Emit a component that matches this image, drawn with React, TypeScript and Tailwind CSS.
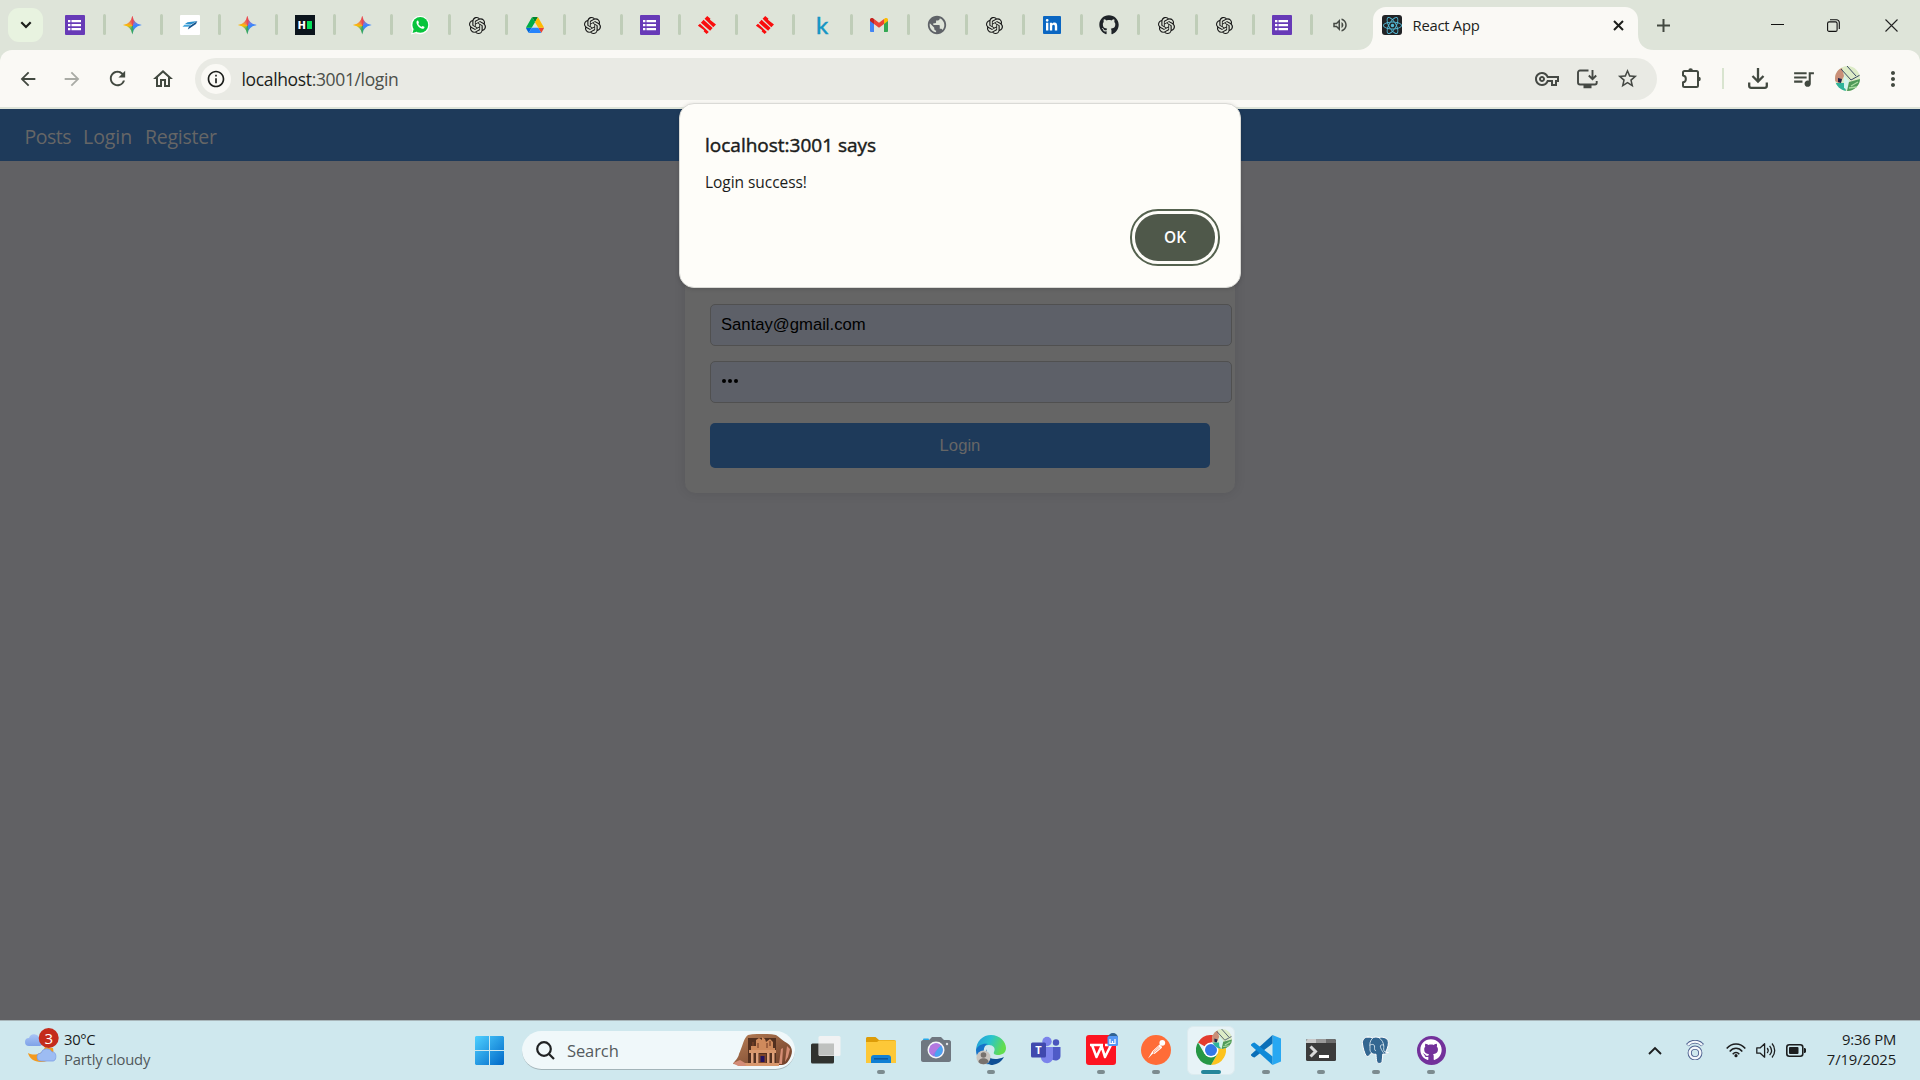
import React from "react";
import { SiOpenai, SiReact } from "react-icons/si";
import { FaGithub, FaLinkedinIn } from "react-icons/fa";
import {
  MdArrowBack,
  MdArrowForward,
  MdRefresh,
  MdOutlineHome,
  MdOutlineVpnKey,
  MdQueueMusic,
  MdMoreVert,
  MdInfoOutline,
  MdStarBorder,
  MdPublic,
  MdOutlineVolumeUp,
} from "react-icons/md";

/* ---------- favicons ---------- */

const Forms = () => (
  <svg width="20" height="20" viewBox="0 0 20 20">
    <rect width="20" height="20" rx="1" fill="#673ab7" />
    <path d="M3 5h2.4v2.2H3zM6.500 5h9.500v2.200H6.500zM3 9h2.400v2.200H3zM6.500 9h9.500v2.200H6.500zM3 13h2.400v2.200H3zM6.500 13h9.500v2.200H6.500z" fill="#fff" />
  </svg>
);

const Gemini = () => (
  <div
    className="size-[19px] bg-[conic-gradient(from_0deg,#ea4a50,#6a80e8_50deg,#3c86fb_90deg,#3c8cf5_150deg,#34a853_185deg,#7cb860_220deg,#fbbc04_270deg,#ef8a50_310deg,#ea4a50)] [clip-path:polygon(50%_0%,57%_22%,66%_34%,78%_43%,100%_50%,78%_57%,66%_66%,57%_78%,50%_100%,43%_78%,34%_66%,22%_57%,0%_50%,22%_43%,34%_34%,43%_22%)]"
  />
);

const Wing = () => (
  <svg width="20" height="20" viewBox="0 0 20 20">
    <rect width="20" height="20" rx="1" fill="#fff" />
    <path d="M17.300 6L7.500 7.200 5 9h7z" fill="#2b8fcb" />
    <path d="M11.500 9.300L4.500 9.800 2.500 11.800h6z" fill="#45a6dc" />
    <path d="M17.300 6L9 11.500l-1.200 3L16 9z" fill="#17558d" />
  </svg>
);

const HBlock = () => (
  <div className="flex size-5 items-center justify-center gap-px bg-[#0b141c]">
    <span className="font-['Inter',sans-serif] text-[10px] leading-none font-black text-white">H</span>
    <span className="h-2 w-[5px] bg-[#05e05a]" />
  </div>
);

const Whatsapp = () => (
  <svg width="20" height="20" viewBox="0 0 20 20">
    <path d="M1 19.500l1.300-4.600A9.200 9.200 0 1 1 5.800 18.200z" fill="#fff" />
    <circle cx="10.300" cy="9.900" r="7.900" fill="#08c43c" />
    <path d="M2.500 18l1.200-4 3 2.800z" fill="#08c43c" />
    <path d="M7.600 5.600c-1.200.6-1.400 1.900-.8 3.300.9 2.200 2.700 4 5.200 4.800 1.100.3 2.300-.1 2.500-1.400.1-.4-.2-.6-1.800-1.400-.5-.2-.8 1-1.300.9-1.400-.5-2.500-1.500-3.100-2.700-.2-.4.8-.9.600-1.400-.6-1.900-.7-2.200-1.300-2.100z" fill="#fff" />
  </svg>
);

const Drive = () => (
  <svg width="18" height="16" viewBox="0 0 87.300 78">
    <path d="m6.600 66.850 3.850 6.650c.8 1.400 1.950 2.500 3.300 3.300l13.750-23.800h-27.500c0 1.550.4 3.100 1.200 4.500z" fill="#0066da" />
    <path d="m43.650 25-13.750-23.800c-1.350.8-2.500 1.900-3.300 3.300l-25.400 44a9.060 9.060 0 0 0-1.200 4.500h27.500z" fill="#00ac47" />
    <path d="m73.550 76.800c1.350-.8 2.500-1.900 3.300-3.300l1.600-2.750 7.650-13.250c.8-1.400 1.200-2.950 1.200-4.500h-27.502l5.852 11.500z" fill="#ea4335" />
    <path d="m43.650 25 13.750-23.800c-1.350-.8-2.900-1.200-4.500-1.200h-18.500c-1.600 0-3.150.45-4.500 1.200z" fill="#00832d" />
    <path d="m59.800 53h-32.300l-13.750 23.800c1.350.8 2.900 1.200 4.500 1.200h50.800c1.600 0 3.150-.45 4.500-1.200z" fill="#2684fc" />
    <path d="m73.400 26.500-12.700-22c-.8-1.400-1.950-2.500-3.300-3.300l-13.750 23.800 16.150 28h27.450c0-1.550-.4-3.100-1.200-4.500z" fill="#ffba00" />
  </svg>
);

const RedBars = () => (
  <svg width="18" height="18" viewBox="0 0 18 18" fill="#f90d0d">
    <path d="M9.200 0l3.300 2.800-.6.9L18 8.500l-2.700 2.700L6.600 2.700z" />
    <path d="M5.600 3.800l9 8.300-2.500 2.600-9.200-8z" />
    <path d="M2 7.700l8.800 8.200L8.600 18l-3-2.800.6-.9L-.2 9.600z" />
  </svg>
);

const Gmail = () => (
  <svg width="18" height="14" viewBox="0 0 18 14">
    <path d="M0 2v11.200c0 .5.400.8.800.8H4V5z" fill="#4285f4" />
    <path d="M18 2v11.200c0 .5-.4.800-.8.800H14V5z" fill="#34a853" />
    <path d="M14 .9V6l4-3V1.800C18 .2 16.200-.5 15 .3z" fill="#fbbc04" />
    <path d="M4 6V.9L9 4.700l5-3.800V6L9 9.800z" fill="#ea4335" />
    <path d="M0 1.800V3l4 3V.9L3 .3C1.800-.5 0 .2 0 1.800z" fill="#c5221f" />
  </svg>
);

const OpenAi = () => <SiOpenai className="size-[17px] text-[#161616]" />;
const Kay = () => (
  <span className="font-['Lato',sans-serif] text-[24px] leading-5 text-[#1495c4] [-webkit-text-stroke:0.5px_#1495c4]">k</span>
);
const Globe = () => <MdPublic className="size-[22px] shrink-0 text-[#5f6368]" />;
const Linked = () => (
  <div className="flex size-[18px] items-center justify-center rounded-[1px] bg-[#0a66c2]">
    <FaLinkedinIn className="size-[13px] text-white" />
  </div>
);
const Hub = () => <FaGithub className="size-[20px] text-[#1f2328]" />;

const pinnedTabs = [
  Forms, Gemini, Wing, Gemini, HBlock, Gemini, Whatsapp, OpenAi, Drive, OpenAi, Forms,
  RedBars, RedBars, Kay, Gmail, Globe, OpenAi, Linked, Hub, OpenAi, OpenAi, Forms,
];

/* ---------- browser chrome ---------- */

function TabStrip() {
  return (
    <div className="flex h-[50px] shrink-0 bg-[#dee4d9] pl-2">
      <button className="mt-2 mr-[5.4px] flex h-[34px] w-[35px] shrink-0 items-center justify-center rounded-[11px] bg-[#e8f3e0]">
        <svg width="12" height="8" viewBox="0 0 12 8" fill="none" stroke="#1b1d1a" strokeWidth="2.200">
          <path d="M1.300 1.300L6 6l4.700-4.700" />
        </svg>
      </button>
      {pinnedTabs.map((Icon, i) => (
        <div key={i} className="flex h-[50px] w-[57.469px] shrink-0 items-center justify-between pl-[16.500px]">
          <div className="flex w-5 justify-center">
            <Icon />
          </div>
          <span className="mb-px h-[21px] w-[3px] rounded-full bg-[#bfcdb8]" />
        </div>
      ))}
      <div className="flex h-[50px] w-[44.300px] shrink-0 items-center pl-[18.500px]">
        <MdOutlineVolumeUp className="size-[18px] text-[#454944]" />
      </div>
      <svg width="16" height="16" className="mt-[34px] shrink-0">
        <path d="M16 0v16H0C10 16 16 10 16 0z" fill="#faf9f5" />
      </svg>
      <div className="mt-[7px] flex h-[43px] w-[265px] shrink-0 items-center rounded-t-[13px] bg-[#faf9f5] pb-[7px] pl-[9px]">
        <div className="flex size-5 items-center justify-center rounded-[3px] bg-[#222426]">
          <SiReact className="size-[19px] text-[#53b9d6]" />
        </div>
        <span className="ml-[10.500px] font-['Open_Sans',sans-serif] text-[14.800px] leading-5 tracking-[-0.25px] text-[#1d1f1c]">React App</span>
        <svg className="mr-[14px] ml-auto" width="11" height="11" viewBox="0 0 11 11" stroke="#1c1e1b" strokeWidth="2">
          <path d="M1 1l9 9M10 1l-9 9" />
        </svg>
      </div>
      <svg width="16" height="16" className="mt-[34px] shrink-0">
        <path d="M0 0v16h16C6 16 0 10 0 0z" fill="#faf9f5" />
      </svg>
      <div className="flex flex-1 items-center">
        <svg className="ml-[3px]" width="13" height="13" viewBox="0 0 13 13" stroke="#424840" strokeWidth="2">
          <path d="M6.500 0v13M0 6.500h13" />
        </svg>
        <svg className="mb-[3px] ml-[100.500px]" width="13" height="2" viewBox="0 0 13 2">
          <rect y="1" width="13" height="1" fill="#111" />
        </svg>
        <svg className="ml-[43px]" width="13" height="13" viewBox="0 0 13 13" fill="none" stroke="#111" strokeWidth="1.100">
          <rect x=".6" y="2.900" width="9.500" height="9.500" rx="1.500" />
          <path d="M3 .7h6.500a2.800 2.800 0 0 1 2.800 2.800V10" />
        </svg>
        <svg className="ml-[45px]" width="13" height="13" viewBox="0 0 13 13" stroke="#222" strokeWidth="1.100">
          <path d="M.5 .5l12 12M12.500 .5l-12 12" />
        </svg>
      </div>
    </div>
  );
}

function Avatar({ className }: { className: string }) {
  return (
    <svg className={className} viewBox="0 0 25 25">
      <defs>
        <clipPath id="avatarClip">
          <circle cx="12.500" cy="12.500" r="12.500" />
        </clipPath>
      </defs>
      <g clipPath="url(#avatarClip)">
        <rect width="25" height="25" fill="#dcebc6" />
        <path d="M0 5l7-3 2 8-4 8-5-3z" fill="#c98f78" />
        <path d="M3 12l4 1-1 4-3-1z" fill="#22264a" />
        <path d="M0 17l9 0 2 8H0z" fill="#2fb39a" />
        <path d="M9 9l5 6-1 9-4-2z" fill="#d5f3ee" />
        <path d="M14 16l11-3v12H12z" fill="#4f9a58" />
        <path d="M16 20l7-4M14 22l8-1" stroke="#a8dca0" strokeWidth="1.300" />
        <path d="M6 3l10 11 9-5M12 0l9 10" stroke="#3b4a66" strokeWidth="1" fill="none" />
      </g>
    </svg>
  );
}

function Toolbar() {
  return (
    <div className="h-[59px] shrink-0 bg-[#dee4d9]">
      <div className="flex h-[57px] items-center rounded-t-[12px] bg-[#faf9f5] pl-[16.500px]">
        <MdArrowBack className="size-[22px] text-[#424940]" />
        <MdArrowForward className="ml-[22.500px] size-[22px] text-[#a9aba5]" />
        <MdRefresh className="ml-[23px] size-[23px] text-[#424940]" />
        <MdOutlineHome className="ml-[21.500px] size-[24px] text-[#424940]" />
        <div className="ml-[20.500px] flex h-[42px] w-[1462px] items-center rounded-full bg-[#e9eae4] pl-1.5">
          <div className="flex size-[30px] items-center justify-center rounded-full bg-[#faf9f5]">
            <MdInfoOutline className="size-5 text-[#1c1e1b]" />
          </div>
          <span className="ml-[10.500px] font-['Open_Sans',sans-serif] text-[17.500px] leading-6 tracking-[-0.350px] text-[#4b4f49]">
            <span className="text-[#1b1d1a]">localhost</span>:3001/login
          </span>
          <MdOutlineVpnKey className="ml-auto size-6 text-[#454944]" />
          <svg className="ml-[18px]" width="21" height="20" viewBox="0 0 21 20" fill="none" stroke="#454944" strokeWidth="1.900">
            <path d="M11.500 1.500H3a2 2 0 0 0-2 2v10a2 2 0 0 0 2 2h15a1.700 1.700 0 0 0 1.700-1.700V12" />
            <path d="M15.500 1v9M11.800 6.500l3.700 3.700 3.700-3.700" />
            <path d="M6.500 17.500h8" strokeWidth="3.500" />
          </svg>
          <MdStarBorder className="mr-[18px] ml-[18px] size-[23px] text-[#454944]" />
        </div>
        <svg className="mb-[2px] ml-[24px]" width="22" height="22" viewBox="0 0 22 22" fill="none" stroke="#424940" strokeWidth="2" strokeLinejoin="round">
          <path d="M3.500 4h12A1.500 1.500 0 0 1 17 5.500v13a1.500 1.500 0 0 1-1.500 1.500h-12A1.500 1.500 0 0 1 2 18.500v-3.300c3.800-.4 3.800-6.200 0-6.600V5.500A1.500 1.500 0 0 1 3.500 4z" />
          <path d="M7.300 3.500a2.300 2.300 0 0 1 4.600 0zM17.500 9.700a2.300 2.300 0 0 1 0 4.600z" fill="#424940" stroke="none" />
        </svg>
        <span className="ml-[19px] h-[21px] w-[2px] bg-[#d8e4cf]" />
        <svg className="ml-[23.500px]" width="20" height="21" viewBox="0 0 20 21" fill="none" stroke="#424940" strokeWidth="2.300">
          <path d="M10 0v13M4.500 8L10 13.500 15.500 8M1.200 14.500v3.300a2 2 0 0 0 2 2h13.600a2 2 0 0 0 2-2v-3.300" />
        </svg>
        <MdQueueMusic className="ml-[23px] size-[25px] text-[#424940]" />
        <Avatar className="ml-[19.500px] size-[25px]" />
        <MdMoreVert className="ml-[20.500px] size-6 text-[#424940]" />
      </div>
    </div>
  );
}

/* ---------- page ---------- */

function LoginPage() {
  return (
    <div className="flex h-[911px] shrink-0 flex-col bg-[#616164]">
      <nav className="flex h-[52px] shrink-0 items-center bg-[#1e3a5a] pt-1 pl-[24.500px] font-['Open_Sans',sans-serif] text-[19.500px] text-[#666666]">
        <a className="w-[58.500px] tracking-[-0.5px]">Posts</a>
        <a className="w-[62px] tracking-[-0.050px]">Login</a>
        <a className="tracking-[-0.25px]">Register</a>
      </nav>
      <div className="mx-auto mt-[60px] flex h-[272px] w-[550px] flex-col rounded-[10px] bg-[#656565] px-[25px] pt-[83px] font-['Liberation_Sans',sans-serif] text-[16.670px] shadow-[0_0_12px_rgba(0,0,0,0.1)]">
        <div className="flex h-[42px] w-[522px] shrink-0 items-center rounded-[5px] border border-[#505050] bg-[#5d6068] px-[10px] pb-[2px] text-black">
          Santay@gmail.com
        </div>
        <div className="mt-[15px] flex h-[42px] w-[522px] shrink-0 items-center gap-[1.600px] rounded-[5px] border border-[#505050] bg-[#5d6068] px-[10.500px] pb-[2px]">
          <span className="size-[4.500px] rounded-full bg-black" />
          <span className="size-[4.500px] rounded-full bg-black" />
          <span className="size-[4.500px] rounded-full bg-black" />
        </div>
        <button className="mt-5 h-[45px] w-[500px] shrink-0 rounded-[5px] bg-[#1e3a5a] text-[#666666]">Login</button>
      </div>
    </div>
  );
}

function AlertDialog() {
  return (
    <div className="absolute top-[103px] left-[679px] flex h-[185px] w-[562px] flex-col rounded-[15px] border border-[#dadad6] bg-[#fefdf9] pt-[26px] pl-[25px] font-['Open_Sans',sans-serif] text-[#1b1c1a] shadow-[0_1px_4px_rgba(0,0,0,0.15)]">
      <h1 className="h-[30px] text-[19px] leading-[30px] [-webkit-text-stroke:0.45px_#1b1c1a]">localhost:3001 says</h1>
      <p className="mt-[10px] text-[15.500px] leading-[24px] tracking-[-0.050px]">Login success!</p>
      <button className="mt-[15px] mr-5 flex h-[57px] w-[90px] items-center justify-center self-end rounded-[28px] border-2 border-[#55624f] p-[3px]">
        <span className="flex h-full w-full items-center justify-center rounded-[23px] bg-[#4f584a] pt-px text-[15.500px] font-semibold text-white">OK</span>
      </button>
    </div>
  );
}

/* ---------- taskbar ---------- */

const Weather = () => (
  <svg width="34" height="36" viewBox="0 0 34 36">
    <defs>
      <linearGradient id="cloud" x1="0" y1="0" x2="0" y2="1">
        <stop offset="0" stopColor="#a9c4f5" />
        <stop offset="1" stopColor="#7fa2e8" />
      </linearGradient>
    </defs>
    <path d="M4 18a4 4 0 0 1 0-8 5.500 5.500 0 0 1 10-1c4 0 5 9 1 9z" fill="url(#cloud)" />
    <path d="M28 20c2 8-3 14-12 14-7 0-12-4-13-9 6 3 14 2 17-6z" fill="#f39a1e" />
    <path d="M16 33a4 4 0 0 1 0-8 6 6 0 0 1 11-1c5-1 5 9 1 9z" fill="#9dbcf3" stroke="#7ea0e6" strokeWidth=".8" />
    <circle cx="23.700" cy="10" r="10" fill="#c42b1c" />
    <text x="23.700" y="15.500" textAnchor="middle" fontFamily="Open Sans, sans-serif" fontSize="15" fill="#fff">3</text>
  </svg>
);

const WindowsLogo = () => (
  <svg width="29" height="29" viewBox="0 0 29 29">
    <defs>
      <linearGradient id="win" x1="0" y1="0" x2="1" y2="1">
        <stop offset="0" stopColor="#4fd0ff" />
        <stop offset="1" stopColor="#0068c8" />
      </linearGradient>
    </defs>
    <path d="M1 0h13v14H0V1zM15 0h13l1 1v13H15zM0 15h14v14H1l-1-1zM15 15h14v13l-1 1H15z" fill="url(#win)" />
  </svg>
);

const Petra = () => (
  <svg width="60" height="33" viewBox="0 0 60 33">
    <defs>
      <linearGradient id="rock" x1="0" y1="0" x2="1" y2="1">
        <stop offset="0" stopColor="#b98058" />
        <stop offset="1" stopColor="#6d3c26" />
      </linearGradient>
    </defs>
    <path d="M0 30c2-4 5-5 6-10 3-6 5-17 9-19 8-1.500 20-1.500 28 0 3 2 7 6 11 8 5 3 6 8 4 13-2 5-5 9-9 9H9z" fill="url(#rock)" />
    <path d="M15 4h28v27H15z" fill="#53301f" />
    <path d="M18 12h5V6l3-2 3 2v-3l3 2 1 3 4-3 3 3v6h2v3H18z" fill="#cf8a5c" />
    <path d="M16 16h27v3H16zM12 29h34v3H12z" fill="#d9986d" />
    <path d="M18 19h2.500v10H18zM23 19h2.500v10H23zM34 19h2.500v10H34zM39 19h2.500v10H39z" fill="#e0a27c" />
    <path d="M26 20h7v9h-7z" fill="#7d4529" />
    <path d="M27.500 22h4v6h-4z" fill="#24125e" />
    <path d="M48 15l2-1-1 16h-3zM54 12l3 3-2 8-3 5z" fill="#d58d74" />
    <path d="M0 29l7-3 5 3 1 3H5z" fill="#d48c77" />
    <path d="M20 8v4M37 7v5M25 9v5M34 9v5" stroke="#7c452b" strokeWidth="1.200" />
  </svg>
);

const TaskView = () => (
  <svg width="30" height="30" viewBox="0 0 30 30">
    <rect y="8.500" width="23" height="20" rx="1.500" fill="#30322f" />
    <rect x="7.500" y="1" width="22" height="20" rx="1.500" fill="#f2f2f2" opacity=".96" />
    <path d="M8 8.500h15V20.500H8z" fill="#bfc1bf" />
  </svg>
);

const Folder = () => (
  <svg width="30" height="30" viewBox="0 0 30 30">
    <path d="M0 3.500C0 2.500.8 2 1.500 2h8l3.500 3h15c1 0 2 .8 2 1.800V10H0z" fill="#dd9c08" />
    <path d="M0 7h11l2-1.500h16l1 1V28H0z" fill="#fdc838" />
    <path d="M5 28v-5c0-2 1-3 3-3h14c2 0 3 1 3 3v5z" fill="#1180d4" />
    <rect x="8" y="23.200" width="14" height="1.300" fill="#0a4e91" />
  </svg>
);

const Camera = () => (
  <svg width="30" height="30" viewBox="0 0 30 30">
    <rect x="2" y="3.500" width="6" height="4" rx="1" fill="#26a8e8" />
    <path d="M0 7c0-1 1-2 2-2h6l3-3h9l3 3h5c1 0 2 1 2 2v18c0 1-1 2-2 2H2c-1 0-2-1-2-2z" fill="#6f7780" />
    <circle cx="15" cy="15" r="8.500" fill="#f4f4f6" />
    <circle cx="15" cy="15" r="6.800" fill="#8a7ae8" />
    <path d="M9 12a6.800 6.800 0 0 1 11-1.500l-9 9.800A6.800 6.800 0 0 1 9 12z" fill="#b478df" />
    <path d="M20 10.500a6.800 6.800 0 0 1-5 11.300c-2 0-2-5 5-11.300z" fill="#4aa3f0" />
    <circle cx="26" cy="9" r="1.200" fill="#dfe3e6" />
  </svg>
);

const Edge = () => (
  <svg width="30" height="30" viewBox="0 0 30 30">
    <defs>
      <linearGradient id="edgeTop" x1="0" y1="0" x2="1" y2=".3">
        <stop offset="0" stopColor="#2298dc" />
        <stop offset=".5" stopColor="#29c3cf" />
        <stop offset="1" stopColor="#62dd4e" />
      </linearGradient>
    </defs>
    <path d="M0 16C0 6 7 0 15 0c9 0 15 7 15 13 0 5-4 7-8 7-3 0-5-1-4-3 2-4-1-7-5-7C7 10 1 14 0 16z" fill="url(#edgeTop)" />
    <path d="M0 15c2-5 7-7 12-6-3 1-5 4-4 9 1 6 6 9 11 9-9 6-19-1-19-12z" fill="#1673c8" />
    <path d="M11 14c-3 8 5 13 17 8-3 6-9 8-13 8-5-1-9-9-4-16z" fill="#0e4f95" />
    <circle cx="7.500" cy="22.500" r="7" fill="#c9c5c0" />
    <circle cx="7.500" cy="20" r="2.800" fill="#77726e" />
    <path d="M2.500 27c0-5 10-5 10 0-2 3-8 3-10 0z" fill="#77726e" />
  </svg>
);

const Teams = () => (
  <svg width="30" height="30" viewBox="0 0 30 30">
    <circle cx="25" cy="7.500" r="3.200" fill="#4a55bd" />
    <path d="M19 12h10.500v9c0 5-7 6-10.500 2z" fill="#4f5bc7" />
    <circle cx="16" cy="6.500" r="4.700" fill="#7b83eb" />
    <path d="M9 12h13v10c0 8-11 8-12 1z" fill="#7b83eb" />
    <rect y="7.500" width="15" height="15" rx="1.500" fill="#4049ae" />
    <text x="7.500" y="19" textAnchor="middle" fontFamily="Open Sans, sans-serif" fontWeight="700" fontSize="11" fill="#fff">T</text>
  </svg>
);

const Wps = () => (
  <svg width="32" height="32" viewBox="0 0 32 32" className="mb-[2px] ml-[2px]">
    <rect y="2" width="30" height="30" rx="3" fill="#fd1421" />
    <path d="M4 12h13M6 12l4.500 12 5-11 3.500 11 6-12h-6" stroke="#fff" strokeWidth="2.500" fill="none" strokeLinejoin="round" />
    <circle cx="27" cy="5" r="5" fill="#2f6291" />
    <rect x="21.500" y="3" width="10.500" height="10" rx="1.500" fill="#5598f5" />
    <path d="M24 6v4.500h2.500V8v2.500H29V6" stroke="#fff" strokeWidth="1.200" fill="none" />
  </svg>
);

const Postman = () => (
  <svg width="30" height="30" viewBox="0 0 30 30">
    <circle cx="15" cy="15" r="15" fill="#ff6c37" />
    <circle cx="21.300" cy="7.800" r="2.900" fill="#fff" />
    <path d="M18.500 9.500c1.500 1 2.500 2 2.500 3.200L13.500 19l-1.200-.8-5.300 5.300 4.300-7.200z" fill="#fff" />
    <path d="M18 11.500l-6 5.700 1.200.3 6-5" stroke="#ff6c37" strokeWidth=".6" fill="none" />
  </svg>
);

const Chrome = () => (
  <div className="relative size-[30px]">
    <svg width="30" height="30" viewBox="0 0 30 30">
      <path d="M15 15L2 7.500A15 15 0 0 1 28 7.500H15z" fill="#e33b2e" />
      <path d="M15 15l13-7.500A15 15 0 0 1 15 30l6.500-11.250z" fill="#fcc31e" />
      <path d="M15 15l6.500 3.750L15 30A15 15 0 0 1 2 7.500l6.500 11.250z" fill="#269745" />
      <circle cx="15" cy="15" r="7.500" fill="#fff" />
      <circle cx="15" cy="15" r="6" fill="#3478e8" />
    </svg>
    <Avatar className="absolute -top-[6px] left-4 size-5" />
  </div>
);

const VsCode = () => (
  <svg width="30" height="30" viewBox="0 0 30 30">
    <path d="M21.500 0L30 3.500v23L21.500 30z" fill="#28a8f2" />
    <path d="M21.500 0v8.500L3.500 22.500 1.800 22 0 20.500v-1z" fill="#0a6fb8" />
    <path d="M21.500 30v-8.500L3.500 7.500 1.800 8 0 9.500v1z" fill="#0e8ad8" />
  </svg>
);

const Terminal = () => (
  <svg width="30" height="22" viewBox="0 0 30 22">
    <rect width="30" height="22" rx="1.500" fill="#3b3b3b" />
    <path d="M1.500 0H10v4H0V1.500z" fill="#c9c9c9" />
    <path d="M10 0h10v4H10z" fill="#9a9a9a" />
    <path d="M20 0h8.500L30 1.500V4H20z" fill="#6c6c6c" />
    <path d="M4.500 7.500L9.500 12.500l-5 5" stroke="#d9d9d9" strokeWidth="3" fill="none" />
    <rect x="13" y="16" width="10" height="3" fill="#fff" />
  </svg>
);

const Postgres = () => (
  <svg className="mr-px" width="29" height="29" viewBox="0 0 29 29" strokeLinejoin="round" strokeLinecap="round">
    <path
      d="M7 1C3 1 1 4 1.500 8c.5 4 2 9 3.500 11.500 1 1.500 2.500 1 3.500-.2l2-2.300c1 1 3 1.500 4.500 1.200.2 3 .3 6 1 8 .6 1.700 4.500 1.700 5-.5.5-2.500.5-5 .8-7.700 2.500.2 4.500-.2 5.700-1.500-1 0-2.200.2-3-.2C27 12 28 7 27 4.500 25.500 1.500 21 .5 18 1.600 15 .8 13 1 11.500 1.900 10 1.300 8.500 1 7 1z"
      fill="#336791"
      stroke="#fff"
      strokeWidth="1"
    />
    <path
      d="M11.500 2.200C9 4.500 8.500 8 9 11c.2 2-.8 4 1.500 6M9 9c2-1 4-.8 4.500.8.4 2-.8 3.500 1 5M18 1.800c3 1.800 4.500 5 4.800 8.200.2 2-1 4 1 6M22.500 9c-1.500-.5-3 0-3.200 1 .2 2.500 1.700 4.500 3 6.500"
      fill="none"
      stroke="#e8f2f6"
      strokeWidth=".8"
    />
  </svg>
);

const GithubDesktop = () => (
  <div className="flex size-[29px] items-center justify-center rounded-full bg-[#73319b]">
    <FaGithub className="size-[22px] text-white" />
  </div>
);

const taskApps = [
  { Icon: TaskView, open: false },
  { Icon: Folder, open: true },
  { Icon: Camera, open: false },
  { Icon: Edge, open: true },
  { Icon: Teams, open: false },
  { Icon: Wps, open: true },
  { Icon: Postman, open: true },
  { Icon: Chrome, open: true, active: true },
  { Icon: VsCode, open: true },
  { Icon: Terminal, open: true },
  { Icon: Postgres, open: true },
  { Icon: GithubDesktop, open: true },
];

function Taskbar() {
  return (
    <div className="flex h-[60px] shrink-0 items-center border-t border-[#a9b6ba] bg-[#cfe8ee] font-['Open_Sans',sans-serif]">
      <div className="flex w-[475px] items-center pl-[25px]">
        <div className="-mt-[9px]">
          <Weather />
        </div>
        <div className="mt-[-3px] ml-[5px] text-[14.800px] leading-5 text-[#1a1c1d]">
          <div className="tracking-[-0.3px]">30°C</div>
          <div className="tracking-[-0.2px] text-[#51595c]">Partly cloudy</div>
        </div>
      </div>
      <WindowsLogo />
      <div className="ml-[18px] flex h-[39px] w-[273px] items-center rounded-full border-b border-[#a3b4b9] bg-[#f0f8fa] pr-[2px] pl-[14px]">
        <svg width="19" height="19" viewBox="0 0 19 19" fill="none" stroke="#202223" strokeWidth="2.200">
          <circle cx="8" cy="8" r="6.800" />
          <path d="M13 13l5 5" />
        </svg>
        <span className="mt-[2px] ml-[12px] text-[16.500px] tracking-[-0.1px] text-[#555b5e]">Search</span>
        <div className="ml-auto">
          <Petra />
        </div>
      </div>
      <div className="ml-[3.500px] flex">
        {taskApps.map(({ Icon, open, active }, i) => (
          <div key={i} className="flex h-[59px] w-[55px] items-center justify-center">
            <div
              className={
                active
                  ? "flex h-[49px] w-[48px] flex-col items-center rounded-md border border-[#dcebef] bg-[#e7f3f7]"
                  : "flex h-[49px] w-[48px] flex-col items-center border border-transparent"
              }
            >
              <div className="mt-[8px] flex h-[30px] items-center justify-center">
                <Icon />
              </div>
              {open && (
                <span className={active ? "mt-[5px] h-1 w-5 rounded-full bg-[#25869a]" : "mt-[5px] h-1 w-2 rounded-full bg-[#7c8b8f]"} />
              )}
            </div>
          </div>
        ))}
      </div>
      <div className="ml-auto flex items-center pr-[24px]">
        <svg width="14" height="9" viewBox="0 0 14 9" fill="none" stroke="#1c1e1f" strokeWidth="1.900">
          <path d="M1 8l6-6 6 6" />
        </svg>
        <svg className="mb-px ml-6" width="18" height="20" viewBox="0 0 18 20" fill="none">
          <circle cx="9" cy="13" r="5.300" stroke="#4c5f8e" strokeWidth="4.200" />
          <circle cx="9" cy="13" r="5.300" stroke="#f4f7fb" strokeWidth="2.400" />
          <path d="M1.300 5.200c4-4.800 11.400-4.800 15.400 0" stroke="#4c5f8e" strokeWidth="3.600" />
          <path d="M1.800 5c4-4.300 10.400-4.300 14.400 0" stroke="#f4f7fb" strokeWidth="2" />
        </svg>
        <svg className="mb-px ml-[22px]" width="20" height="15" viewBox="0 0 20 15" fill="none" stroke="#1c1e1f" strokeWidth="1.500">
          <path d="M.7 5.600c5-6 13.600-6 18.600 0M3.700 8.500c3.600-4.300 9-4.300 12.600 0M6.700 11.200c2-2.300 4.600-2.300 6.600 0" />
          <circle cx="10" cy="12.700" r="1.600" fill="#1c1e1f" stroke="none" />
        </svg>
        <svg className="ml-[10px]" width="20" height="17" viewBox="0 0 20 17" fill="none" stroke="#1c1e1f" strokeWidth="1.300">
          <path d="M.8 5.800h3.500L8.600 1.800v13.400L4.300 11.200H.8z" strokeLinejoin="round" />
          <path d="M11.200 6c1.200 1.500 1.200 3.500 0 5M13.600 3.800c2.300 2.800 2.300 6.600 0 9.400M16 1.500c3.600 4 3.600 10 0 14" />
        </svg>
        <svg className="ml-[10px]" width="20" height="13" viewBox="0 0 20 13">
          <rect x=".8" y=".8" width="16" height="11.400" rx="2.500" fill="none" stroke="#1c1e1f" strokeWidth="1.600" />
          <rect x="3" y="3" width="9.500" height="7" rx="1" fill="#1c1e1f" />
          <path d="M18 4h1l1 1v3l-1 1h-1z" fill="#1c1e1f" />
        </svg>
        <div className="mt-[-3px] w-[90px] text-right text-[14.800px] leading-5 text-[#1a1c1d]">
          <div className="tracking-[-0.2px]">9:36 PM</div>
          <div className="tracking-[-0.1px]">7/19/2025</div>
        </div>
      </div>
    </div>
  );
}

export default function App() {
  return (
    <div className="relative flex h-[1080px] w-[1920px] flex-col overflow-hidden">
      <TabStrip />
      <Toolbar />
      <LoginPage />
      <Taskbar />
      <AlertDialog />
    </div>
  );
}
